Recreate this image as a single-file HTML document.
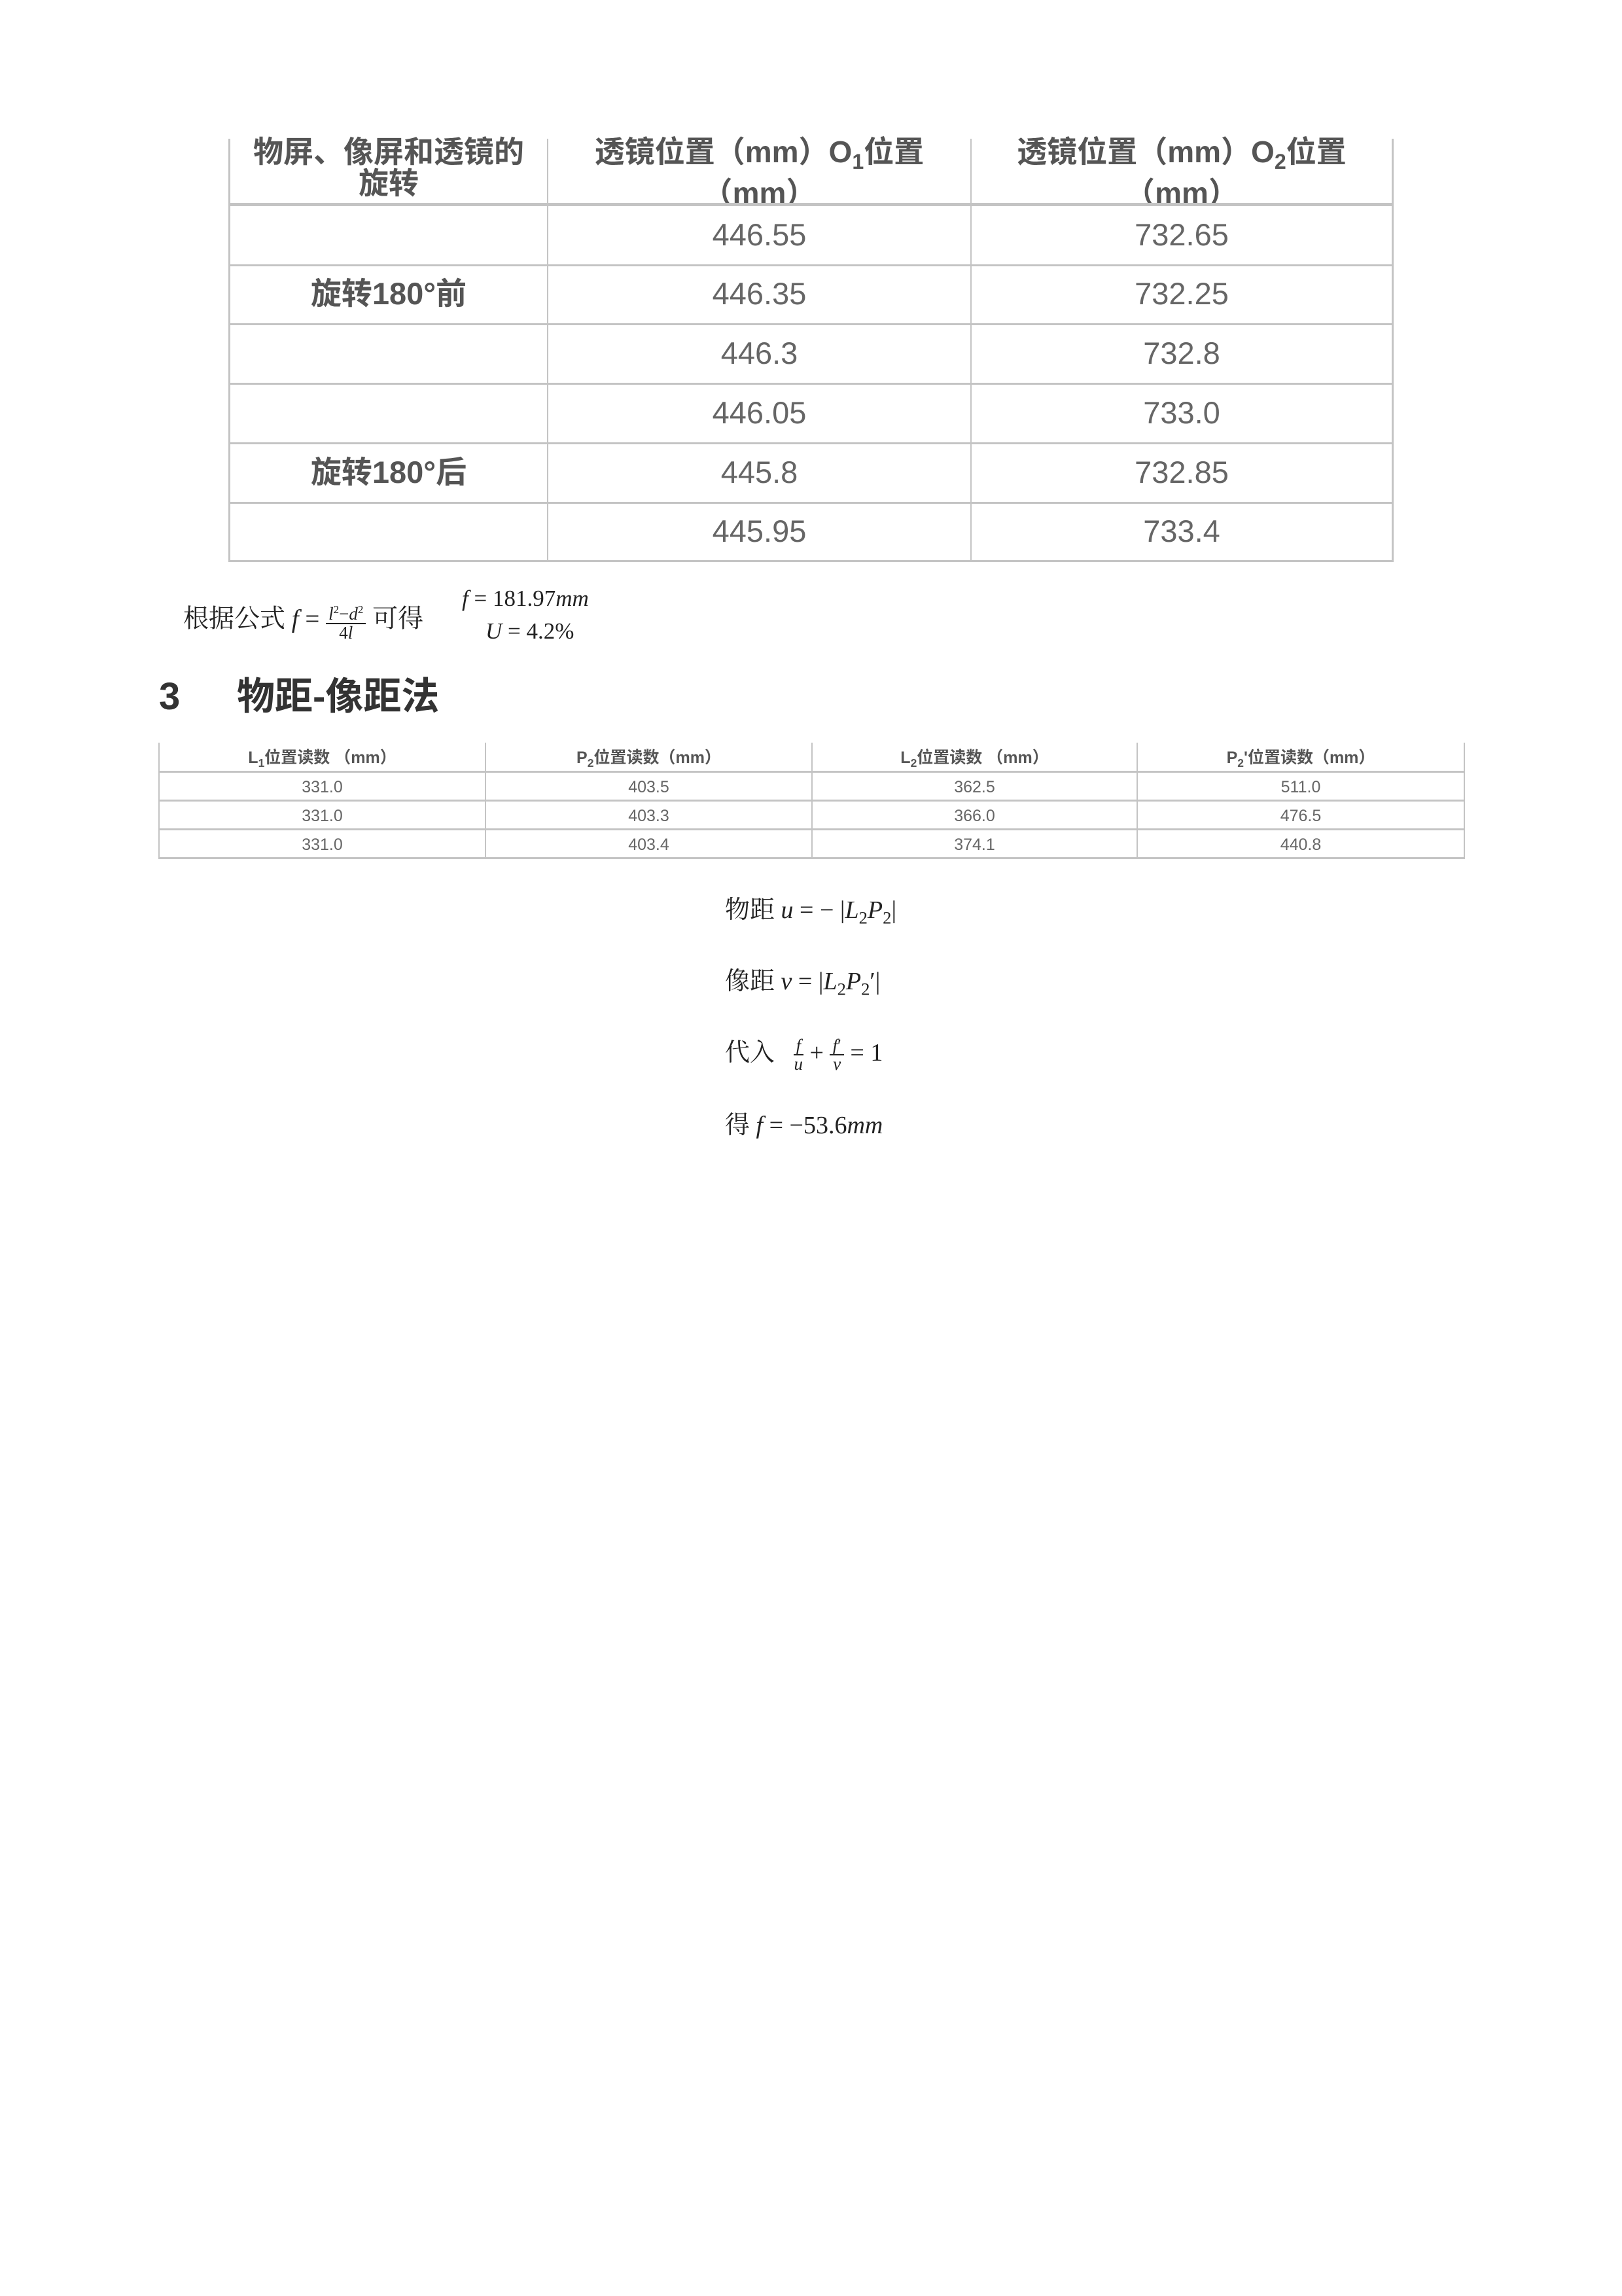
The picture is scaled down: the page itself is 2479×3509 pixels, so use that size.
<!DOCTYPE html>
<html><head><meta charset="utf-8"><style>
body{margin:0;width:2479px;height:3509px;background:#fff;position:relative;overflow:hidden;font-family:"Liberation Sans","Noto Sans CJK SC",sans-serif}
.a{position:absolute;white-space:nowrap}
.hl{position:absolute;background:#c4c4c4}
.t1{position:absolute;font-size:47px;color:#666;text-align:center;line-height:90px}
.h1{position:absolute;font-size:46px;color:#555;font-weight:bold;text-align:center;line-height:48px;overflow:hidden}
.t2{position:absolute;font-size:25px;color:#666;text-align:center;line-height:44px}
.h2{position:absolute;font-size:25px;color:#555;font-weight:bold;text-align:center;line-height:44px}
.m{font-family:"Liberation Serif","Noto Serif CJK SC",serif;color:#222}
i{font-style:italic}
sub{font-size:0.7em}
</style></head><body>
<!-- Table 1 -->
<div class="hl" style="left:349px;top:212px;width:3px;height:646px"></div>
<div class="hl" style="left:836px;top:212px;width:2px;height:646px"></div>
<div class="hl" style="left:1483px;top:212px;width:2px;height:646px"></div>
<div class="hl" style="left:2127px;top:212px;width:3px;height:646px"></div>
<div class="hl" style="left:349px;top:310px;width:1781px;height:5px"></div>
<div class="hl" style="left:349px;top:404px;width:1781px;height:3px"></div>
<div class="hl" style="left:349px;top:494px;width:1781px;height:3px"></div>
<div class="hl" style="left:349px;top:585px;width:1781px;height:3px"></div>
<div class="hl" style="left:349px;top:676px;width:1781px;height:3px"></div>
<div class="hl" style="left:349px;top:767px;width:1781px;height:3px"></div>
<div class="hl" style="left:349px;top:856px;width:1781px;height:3px"></div>
<div class="h1" style="left:352px;top:208px;width:484px;height:102px">物屏、像屏和透镜的<br>旋转</div>
<div class="h1" style="left:838px;top:208px;width:645px;height:102px">透镜位置（mm）O<sub>1</sub>位置<br>（mm）</div>
<div class="h1" style="left:1485px;top:208px;width:642px;height:102px">透镜位置（mm）O<sub>2</sub>位置<br>（mm）</div>
<div class="t1" style="left:838px;top:314px;width:645px">446.55</div>
<div class="t1" style="left:1485px;top:314px;width:642px">732.65</div>
<div class="t1" style="left:352px;top:404px;width:484px;font-weight:bold;color:#555">旋转180°前</div>
<div class="t1" style="left:838px;top:404px;width:645px">446.35</div>
<div class="t1" style="left:1485px;top:404px;width:642px">732.25</div>
<div class="t1" style="left:838px;top:495px;width:645px">446.3</div>
<div class="t1" style="left:1485px;top:495px;width:642px">732.8</div>
<div class="t1" style="left:838px;top:586px;width:645px">446.05</div>
<div class="t1" style="left:1485px;top:586px;width:642px">733.0</div>
<div class="t1" style="left:352px;top:677px;width:484px;font-weight:bold;color:#555">旋转180°后</div>
<div class="t1" style="left:838px;top:677px;width:645px">445.8</div>
<div class="t1" style="left:1485px;top:677px;width:642px">732.85</div>
<div class="t1" style="left:838px;top:767px;width:645px">445.95</div>
<div class="t1" style="left:1485px;top:767px;width:642px">733.4</div>

<!-- formula -->
<div class="a m" style="left:280px;top:918px;font-size:39px;line-height:50px">根据公式 <i>f</i> = <span style="display:inline-block;vertical-align:middle;text-align:center;font-size:27px;line-height:27px"><span style="display:block;border-bottom:2px solid #222;padding:0 4px"><i>l</i><sup style="font-size:17px">2</sup>−<i>d</i><sup style="font-size:17px">2</sup></span><span style="display:block">4<i>l</i></span></span> 可得</div>
<div class="a m" style="left:706px;top:893px;font-size:35px;line-height:44px"><i>f</i> = 181.97<i>mm</i></div>
<div class="a m" style="left:742px;top:943px;font-size:35px;line-height:44px"><i>U</i> = 4.2%</div>

<!-- heading -->
<div class="a" style="left:243px;top:1030px;font-size:58px;font-weight:bold;color:#333;line-height:70px">3</div>
<div class="a" style="left:362px;top:1030px;font-size:58px;font-weight:bold;color:#333;line-height:70px">物距-像距法</div>

<!-- Table 2 -->
<div class="hl" style="left:242px;top:1135px;width:2px;height:177px"></div>
<div class="hl" style="left:741px;top:1135px;width:2px;height:177px"></div>
<div class="hl" style="left:1240px;top:1135px;width:2px;height:177px"></div>
<div class="hl" style="left:1737px;top:1135px;width:2px;height:177px"></div>
<div class="hl" style="left:2237px;top:1135px;width:2px;height:177px"></div>
<div class="hl" style="left:242px;top:1178px;width:1997px;height:3px"></div>
<div class="hl" style="left:242px;top:1222px;width:1997px;height:3px"></div>
<div class="hl" style="left:242px;top:1266px;width:1997px;height:3px"></div>
<div class="hl" style="left:242px;top:1310px;width:1997px;height:3px"></div>
<div class="h2" style="left:244px;top:1136px;width:497px">L<sub>1</sub>位置读数 （mm）</div>
<div class="h2" style="left:743px;top:1136px;width:497px">P<sub>2</sub>位置读数（mm）</div>
<div class="h2" style="left:1242px;top:1136px;width:495px">L<sub>2</sub>位置读数 （mm）</div>
<div class="h2" style="left:1739px;top:1136px;width:498px">P<sub>2</sub>'位置读数（mm）</div>
<div class="t2" style="left:244px;top:1181px;width:497px">331.0</div>
<div class="t2" style="left:743px;top:1181px;width:497px">403.5</div>
<div class="t2" style="left:1242px;top:1181px;width:495px">362.5</div>
<div class="t2" style="left:1739px;top:1181px;width:498px">511.0</div>
<div class="t2" style="left:244px;top:1225px;width:497px">331.0</div>
<div class="t2" style="left:743px;top:1225px;width:497px">403.3</div>
<div class="t2" style="left:1242px;top:1225px;width:495px">366.0</div>
<div class="t2" style="left:1739px;top:1225px;width:498px">476.5</div>
<div class="t2" style="left:244px;top:1269px;width:497px">331.0</div>
<div class="t2" style="left:743px;top:1269px;width:497px">403.4</div>
<div class="t2" style="left:1242px;top:1269px;width:495px">374.1</div>
<div class="t2" style="left:1739px;top:1269px;width:498px">440.8</div>

<!-- equations -->
<div class="a m" style="left:1108px;top:1366px;font-size:38px;line-height:50px">物距 <i>u</i> = − |<i>L</i><sub>2</sub><i>P</i><sub>2</sub>|</div>
<div class="a m" style="left:1108px;top:1475px;font-size:38px;line-height:50px">像距 <i>v</i> = |<i>L</i><sub>2</sub><i>P</i><sub>2</sub>′|</div>
<div class="a m" style="left:1108px;top:1584px;font-size:38px;line-height:50px">代入 &nbsp; <span style="display:inline-block;vertical-align:middle;text-align:center;font-size:27px;line-height:26px"><span style="display:block;border-bottom:2px solid #222;padding:0 4px"><i>f</i></span><span style="display:block"><i>u</i></span></span> + <span style="display:inline-block;vertical-align:middle;text-align:center;font-size:27px;line-height:26px"><span style="display:block;border-bottom:2px solid #222;padding:0 4px"><i>f</i>′</span><span style="display:block"><i>v</i></span></span> = 1</div>
<div class="a m" style="left:1108px;top:1695px;font-size:38px;line-height:50px">得 <i>f</i> = −53.6<i>mm</i></div>
</body></html>
